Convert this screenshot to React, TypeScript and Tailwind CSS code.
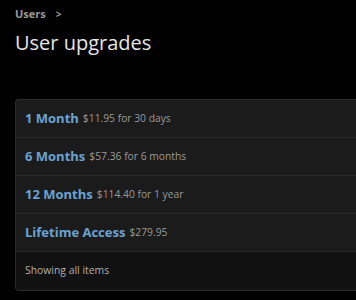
const rows = [
  { name: "1 Month", detail: "$11.95 for 30 days" },
  { name: "6 Months", detail: "$57.36 for 6 months" },
  { name: "12 Months", detail: "$114.40 for 1 year" },
  { name: "Lifetime Access", detail: "$279.95" },
];

const App = () => {
  return (
    <div
      className="min-h-[300px] w-[356px] overflow-hidden bg-black pl-[15px] pt-[6px]"
      style={{ fontFamily: '"Open Sans", "Noto Sans", sans-serif' }}
    >
      <div className="flex items-center gap-[10px] text-[11px] font-bold leading-[16px] text-[#9a9a9a]">
        <span>Users</span>
        <span className="text-[10px]">&gt;</span>
      </div>
      <h1 className="mt-[7px] text-[20px] leading-[28px] text-[#e6e6e6]">User upgrades</h1>
      <div className="mt-[42px] w-[360px] overflow-hidden rounded-l-[4px] border border-r-0 border-[#2c2c2c] bg-[#1b1b1b]">
        {rows.map((row) => (
          <div key={row.name} className="flex h-[38px] items-center gap-[4px] border-b border-[#2a2a2a] pl-[9px]">
            <span className="text-[13px] font-bold text-[#6aa3d3]">{row.name}</span>
            <span className="text-[10.3px] text-[#9a9a9a]">{row.detail}</span>
          </div>
        ))}
        <div className="flex h-[38px] items-center bg-[#111111] pl-[9px] text-[10.4px] text-[#b0b0b0]">
          Showing all items
        </div>
      </div>
    </div>
  );
};

export default App;
